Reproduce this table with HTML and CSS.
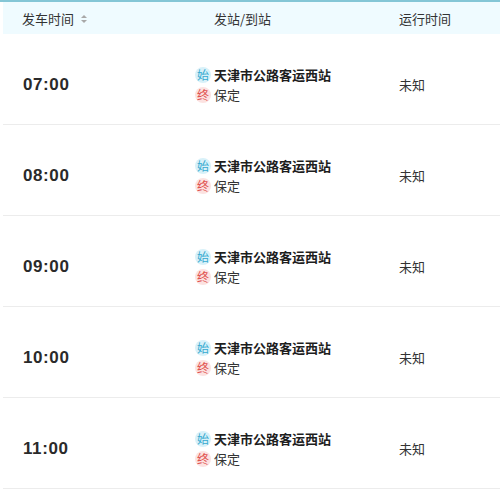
FILE: index.html
```html
<!DOCTYPE html>
<html lang="zh">
<head>
<meta charset="utf-8">
<link rel="stylesheet" href="styles.css">
</head>
<body>
<div class="table">
  <div class="row head">
    <div class="c1">发车时间 <span class="sort"><i class="up"></i><i class="down"></i></span></div>
    <div class="c2h">发站/到站</div>
    <div class="c3">运行时间</div>
  </div>
  <div class="row body">
    <div class="c1 time">07:00</div>
    <div class="c2"><div class="line"><span class="bd start">始</span><b>天津市公路客运西站</b></div><div class="line"><span class="bd end">终</span>保定</div></div>
    <div class="c3">未知</div>
  </div>
  <div class="row body">
    <div class="c1 time">08:00</div>
    <div class="c2"><div class="line"><span class="bd start">始</span><b>天津市公路客运西站</b></div><div class="line"><span class="bd end">终</span>保定</div></div>
    <div class="c3">未知</div>
  </div>
  <div class="row body">
    <div class="c1 time">09:00</div>
    <div class="c2"><div class="line"><span class="bd start">始</span><b>天津市公路客运西站</b></div><div class="line"><span class="bd end">终</span>保定</div></div>
    <div class="c3">未知</div>
  </div>
  <div class="row body">
    <div class="c1 time">10:00</div>
    <div class="c2"><div class="line"><span class="bd start">始</span><b>天津市公路客运西站</b></div><div class="line"><span class="bd end">终</span>保定</div></div>
    <div class="c3">未知</div>
  </div>
  <div class="row body">
    <div class="c1 time">11:00</div>
    <div class="c2"><div class="line"><span class="bd start">始</span><b>天津市公路客运西站</b></div><div class="line"><span class="bd end">终</span>保定</div></div>
    <div class="c3">未知</div>
  </div>
</div>
</body>
</html>
```
FILE: styles.css
```css
html, body {
  margin: 0;
  padding: 0;
  background: #fff;
}
body {
  font-family: "Noto Sans CJK SC", "Liberation Sans", sans-serif;
  font-size: 13px;
  color: #333;
  border-top: 2px solid #84c6d6;
  overflow: hidden;
}
.table {
  margin-left: 3px;
}
.row {
  display: grid;
  grid-template-columns: 192px 204px 1fr;
  align-items: center;
}
.head {
  height: 32px;
  background: #effbff;
}
.head > div {
  line-height: 32px;
  padding-top: 1px;
}
.c1 {
  padding-left: 19px;
  display: flex;
  align-items: center;
}
.c2h {
  padding-left: 19px;
}
.sort {
  display: inline-flex;
  flex-direction: column;
  gap: 2px;
  margin-left: 7px;
}
.sort i {
  display: block;
  width: 0;
  height: 0;
  border-left: 3.5px solid transparent;
  border-right: 3.5px solid transparent;
}
.sort .up { border-bottom: 3.5px solid #a8a8a8; }
.sort .down { border-top: 3.5px solid #a8a8a8; }
.body {
  border-bottom: 1px solid #ececec;
  padding-top: 11px;
  box-sizing: border-box;
  height: 91px;
}
.time {
  font-family: "Liberation Sans", Arial, sans-serif;
  font-weight: bold;
  font-size: 17px;
  letter-spacing: 0.6px;
  color: #2a2a2a;
  padding-left: 20px;
}
.line {
  line-height: 20px;
  height: 20px;
  white-space: nowrap;
}
.line b {
  font-weight: bold;
  color: #1e1e1e;
}
.bd {
  display: inline-block;
  font-size: 12px;
  line-height: 16px;
  width: 16px;
  text-align: center;
  border-radius: 50%;
  margin-right: 3px;
}
.start { color: #35a9cf; background: #d8f1f9; }
.end { color: #e0524f; background: #fce2e1; }
.c3 {
  color: #333;
}
```
